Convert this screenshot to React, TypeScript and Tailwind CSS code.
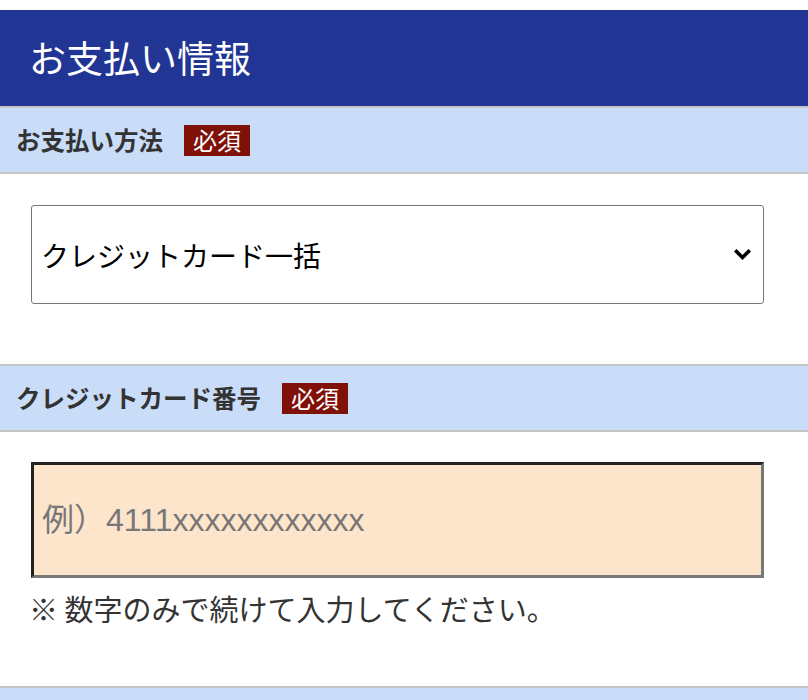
import React from "react";

const jp = { fontFamily: '"Noto Sans CJK JP", "Noto Sans", sans-serif' };

const Required: React.FC = () => (
  <span className="inline-flex h-[31px] items-center bg-[#7f1109] px-[9px] text-[24px] leading-none text-white">
    必須
  </span>
);

const SectionHead: React.FC<{ label: string }> = ({ label }) => (
  <div className="flex h-[68px] items-center gap-[21px] border-y-2 border-[#c4c4c4] bg-[#c9dcf8] px-[16px]">
    <span className="text-[24.5px] font-bold text-[#333]">{label}</span>
    <Required />
  </div>
);

export default function App() {
  return (
    <div className="min-h-[700px] bg-white pt-[10px]" style={jp}>
      <div className="flex h-[96px] items-center bg-[#213594] px-[29px]">
        <h1 className="text-[37px] font-normal text-white">お支払い情報</h1>
      </div>

      <SectionHead label="お支払い方法" />
      <div className="h-[190px] px-[31px] pt-[31px]">
        <div className="flex h-[99px] w-[733px] items-center justify-between rounded-[3px] border border-[#777] bg-white pl-[9px] pr-[12px]">
          <span className="text-[28px] text-black">クレジットカード一括</span>
          <svg width="17" height="13" viewBox="0 0 17 13" fill="none">
            <path d="M2.5 3.5 L8.5 9.5 L14.5 3.5" stroke="black" strokeWidth="3.6" strokeLinecap="square" />
          </svg>
        </div>
      </div>

      <SectionHead label="クレジットカード番号" />
      <div className="h-[254px] px-[31px] pt-[30px]">
        <div className="flex h-[116px] w-[733px] items-center border-[3px] border-t-[#222] border-l-[#222] border-b-[#777] border-r-[#777] bg-[#fde5cc] px-[8px]">
          <span className="text-[32px] text-[#777]" style={{ fontFamily: '"Liberation Sans", "Noto Sans CJK JP", sans-serif' }}>
            例）4111xxxxxxxxxxxx
          </span>
        </div>
        <p className="-ml-[2px] mt-[9px] text-[29px] text-[#333]">※ 数字のみで続けて入力してください。</p>
      </div>

      <div className="h-[20px] border-t-2 border-[#c4c4c4] bg-[#c9dcf8]" />
    </div>
  );
}
